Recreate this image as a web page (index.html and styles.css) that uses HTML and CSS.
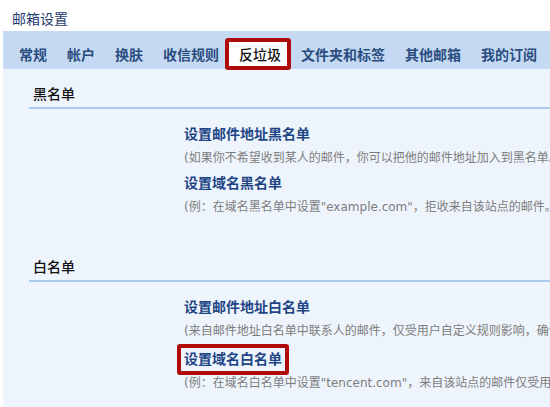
FILE: index.html
```html
<!DOCTYPE html>
<html lang="zh-CN">
<head>
  <meta charset="UTF-8" />
  <title>邮箱设置</title>
  <link rel="stylesheet" href="styles.css">
</head>
<body>

  <div class="title">邮箱设置</div>

  <div class="page">
    <nav class="tabs">
      <a class="tab" href="#">常规</a>
      <a class="tab" href="#">帐户</a>
      <a class="tab" href="#">换肤</a>
      <a class="tab" href="#">收信规则</a>
      <a class="tab active" href="#">反垃圾</a>
      <a class="tab" href="#">文件夹和标签</a>
      <a class="tab" href="#">其他邮箱</a>
      <a class="tab" href="#">我的订阅</a>
    </nav>

    <main class="panel">
      <section class="section">
        <h2>黑名单</h2>
        <div class="items">
          <a class="link" href="#">设置邮件地址黑名单</a>
          <p class="desc">(如果你不希望收到某人的邮件，你可以把他的邮件地址加入到黑名单。</p>
          <a class="link" href="#">设置域名黑名单</a>
          <p class="desc">(例：在域名黑名单中设置"example.com"，拒收来自该站点的邮件。</p>
        </div>
      </section>

      <section class="section">
        <h2>白名单</h2>
        <div class="items">
          <a class="link" href="#">设置邮件地址白名单</a>
          <p class="desc">(来自邮件地址白名单中联系人的邮件，仅受用户自定义规则影响，确保不被拦截。</p>
          <div><a class="link marked" href="#">设置域名白名单</a></div>
          <p class="desc">(例：在域名白名单中设置"tencent.com"，来自该站点的邮件仅受用户自定义规则影响。</p>
        </div>
      </section>
    </main>
  </div>

</body>
</html>
```

FILE: styles.css
```css
* {
  margin: 0;
  padding: 0;
  box-sizing: border-box;
}

body {
  font-family: "Noto Sans CJK SC", sans-serif;
  background: #fff;
  width: 550px;
  height: 407px;
  overflow: hidden;
}

.title {
  height: 31px;
  padding: 8px 0 0 12px;
  font-size: 14px;
  line-height: 20px;
  color: #1f3d70;
}

.page {
  margin-left: 3px;
}

.tabs {
  display: flex;
  height: 38px;
  padding: 7px 0 0 6px;
  background: #c5daf2;
  white-space: nowrap;
}

.tab {
  height: 32px;
  padding: 0 10px;
  font-size: 14px;
  font-weight: bold;
  line-height: 32px;
  color: #2a4d80;
  text-decoration: none;
}

.tab.active {
  position: relative;
  z-index: 1;
  margin-left: -4px;
  padding: 0 6px 0 10px;
  line-height: 24px;
  border: 4px solid #b00b0b;
  border-radius: 3px;
  background: #fff;
  color: #111;
  font-weight: 500;
}

.panel {
  height: 338px;
  padding-top: 14px;
  background: #eef4fb;
}

.section {
  margin-bottom: 40px;
}

.section h2 {
  margin-left: 26px;
  padding: 0 0 4px 4px;
  font-size: 14px;
  font-weight: 500;
  line-height: 20px;
  color: #111;
  border-bottom: 2px solid #a9c9ee;
}

.items {
  padding: 14px 0 0 181px;
  white-space: nowrap;
}

.link {
  display: block;
  margin-bottom: 6px;
  font-size: 14px;
  font-weight: bold;
  line-height: 20px;
  color: #1d4585;
  text-decoration: none;
}

.link.marked {
  display: inline-block;
  margin: -4px -7px -1px;
  padding: 0 3px 3px;
  border: 4px solid #b00b0b;
  border-radius: 3px;
}

.desc {
  margin-bottom: 6px;
  font-family: "DejaVu Sans", "Noto Sans CJK SC", sans-serif;
  font-size: 12px;
  line-height: 18px;
  color: #7d7d7d;
}

.desc + .link,
.desc + div {
  margin-top: -1px;
}
```
